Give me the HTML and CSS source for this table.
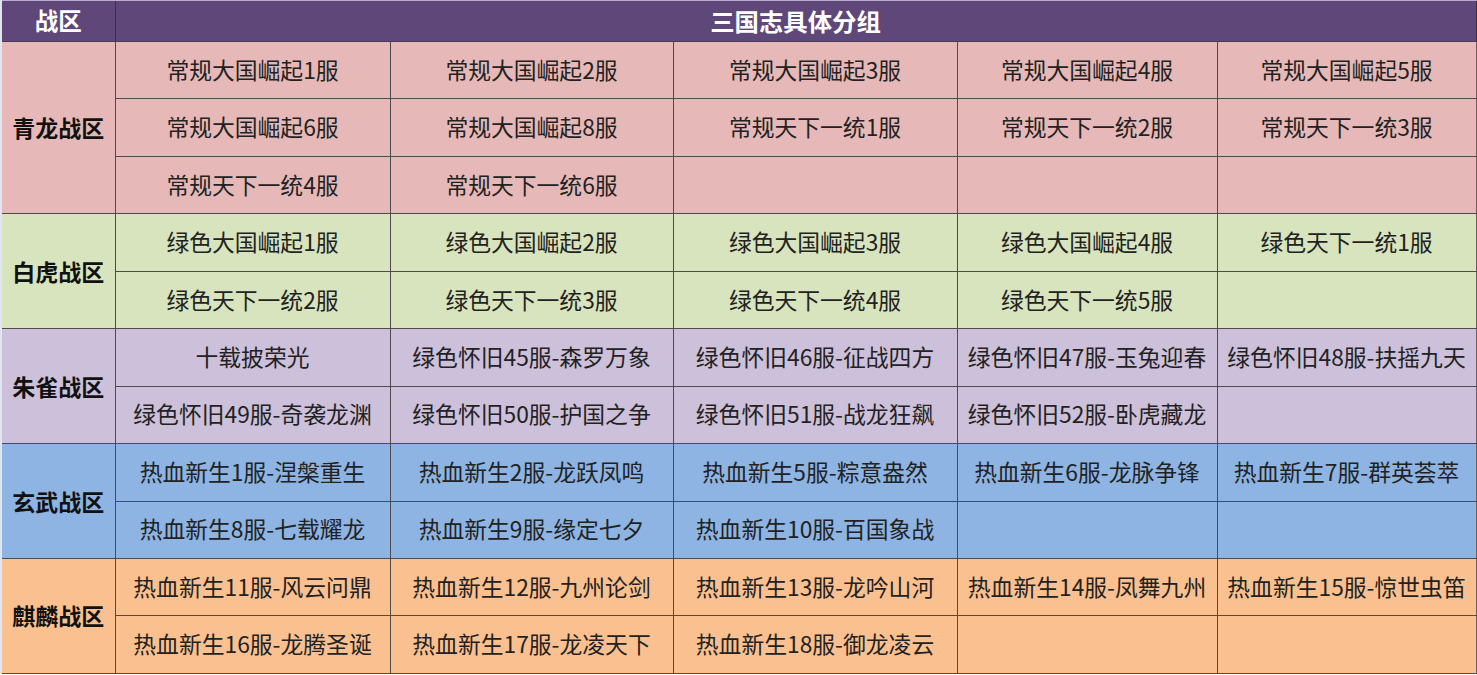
FILE: index.html
```html
<!DOCTYPE html>
<html lang="zh-CN">
<head>
<meta charset="utf-8">
<title>三国志具体分组</title>
<link rel="stylesheet" href="styles.css">
</head>
<body>
<div class="frame">
<table class="grid">
  <colgroup>
    <col class="c-zone">
    <col class="c1">
    <col class="c2">
    <col class="c3">
    <col class="c4">
    <col class="c5">
  </colgroup>
  <thead>
    <tr class="head">
      <th class="h-zone">战区</th>
      <th class="h-title" colspan="5">三国志具体分组</th>
    </tr>
  </thead>
  <tbody class="qinglong">
    <tr><th class="zone" rowspan="3">青龙战区</th><td>常规大国崛起1服</td><td>常规大国崛起2服</td><td>常规大国崛起3服</td><td>常规大国崛起4服</td><td>常规大国崛起5服</td></tr>
    <tr><td>常规大国崛起6服</td><td>常规大国崛起8服</td><td>常规天下一统1服</td><td>常规天下一统2服</td><td>常规天下一统3服</td></tr>
    <tr><td>常规天下一统4服</td><td>常规天下一统6服</td><td></td><td></td><td></td></tr>
  </tbody>
  <tbody class="baihu">
    <tr><th class="zone" rowspan="2">白虎战区</th><td>绿色大国崛起1服</td><td>绿色大国崛起2服</td><td>绿色大国崛起3服</td><td>绿色大国崛起4服</td><td>绿色天下一统1服</td></tr>
    <tr><td>绿色天下一统2服</td><td>绿色天下一统3服</td><td>绿色天下一统4服</td><td>绿色天下一统5服</td><td></td></tr>
  </tbody>
  <tbody class="zhuque">
    <tr><th class="zone" rowspan="2">朱雀战区</th><td>十载披荣光</td><td>绿色怀旧45服-森罗万象</td><td>绿色怀旧46服-征战四方</td><td>绿色怀旧47服-玉兔迎春</td><td>绿色怀旧48服-扶摇九天</td></tr>
    <tr><td>绿色怀旧49服-奇袭龙渊</td><td>绿色怀旧50服-护国之争</td><td>绿色怀旧51服-战龙狂飙</td><td>绿色怀旧52服-卧虎藏龙</td><td></td></tr>
  </tbody>
  <tbody class="xuanwu">
    <tr><th class="zone" rowspan="2">玄武战区</th><td>热血新生1服-涅槃重生</td><td>热血新生2服-龙跃凤鸣</td><td>热血新生5服-粽意盎然</td><td>热血新生6服-龙脉争锋</td><td>热血新生7服-群英荟萃</td></tr>
    <tr><td>热血新生8服-七载耀龙</td><td>热血新生9服-缘定七夕</td><td>热血新生10服-百国象战</td><td></td><td></td></tr>
  </tbody>
  <tbody class="qilin">
    <tr><th class="zone" rowspan="2">麒麟战区</th><td>热血新生11服-风云问鼎</td><td>热血新生12服-九州论剑</td><td>热血新生13服-龙吟山河</td><td>热血新生14服-凤舞九州</td><td>热血新生15服-惊世虫笛</td></tr>
    <tr><td>热血新生16服-龙腾圣诞</td><td>热血新生17服-龙凌天下</td><td>热血新生18服-御龙凌云</td><td></td><td></td></tr>
  </tbody>
</table>
</div>
</body>
</html>
```

FILE: styles.css
```css
html, body {
  margin: 0;
  padding: 0;
  background: #ffffff;
}

.frame {
  width: 1475px;
  padding: 1px 0 0 2px;
  background: linear-gradient(to right, #dfe6f0 0, #dfe6f0 2px, transparent 2px), linear-gradient(#b7aecb, #b7aecb) top / 100% 1px no-repeat;
}

.grid {
  table-layout: fixed;
  border-collapse: collapse;
  width: 1474px;
  font-family: "Noto Sans CJK SC", "Noto Sans", sans-serif;
  font-size: 22.8px;
  color: #222222;
}

.c-zone { width: 113px; }
.c1 { width: 275px; }
.c2 { width: 283px; }
.c3 { width: 284px; }
.c4 { width: 260px; }
.c5 { width: 259px; }

.grid td,
.grid th {
  padding: 0;
  text-align: center;
  vertical-align: middle;
  white-space: nowrap;
  overflow: hidden;
  line-height: 1;
}

.grid td {
  height: 56.45px;
  border: 1px solid #4e4a4e;
  font-weight: 400;
}

.head th {
  height: 40px;
  background: #5f4879;
  color: #ffffff;
  font-weight: 700;
  border-bottom: 1px solid #4a3a5e;
}

.h-zone {
  font-size: 23.5px;
  border-right: 1px solid #3b3040;
}

.h-title {
  font-size: 24.4px;
  border-right: 1px solid #3b3040;
}

.zone {
  font-size: 23px;
  font-weight: 700;
  color: #111111;
  border: 1px solid #4e4a4e;
  border-left: none;
}

.grid td:last-child {
  border-right: 1px solid #6b6060;
}

.qinglong td, .qinglong th { background: #e6b9b8; }
.baihu td, .baihu th { background: #d8e4bd; }
.zhuque td, .zhuque th { background: #cdc0da; }
.xuanwu td, .xuanwu th { background: #8db4e2; }
.qilin td, .qilin th { background: #fac090; }
```
